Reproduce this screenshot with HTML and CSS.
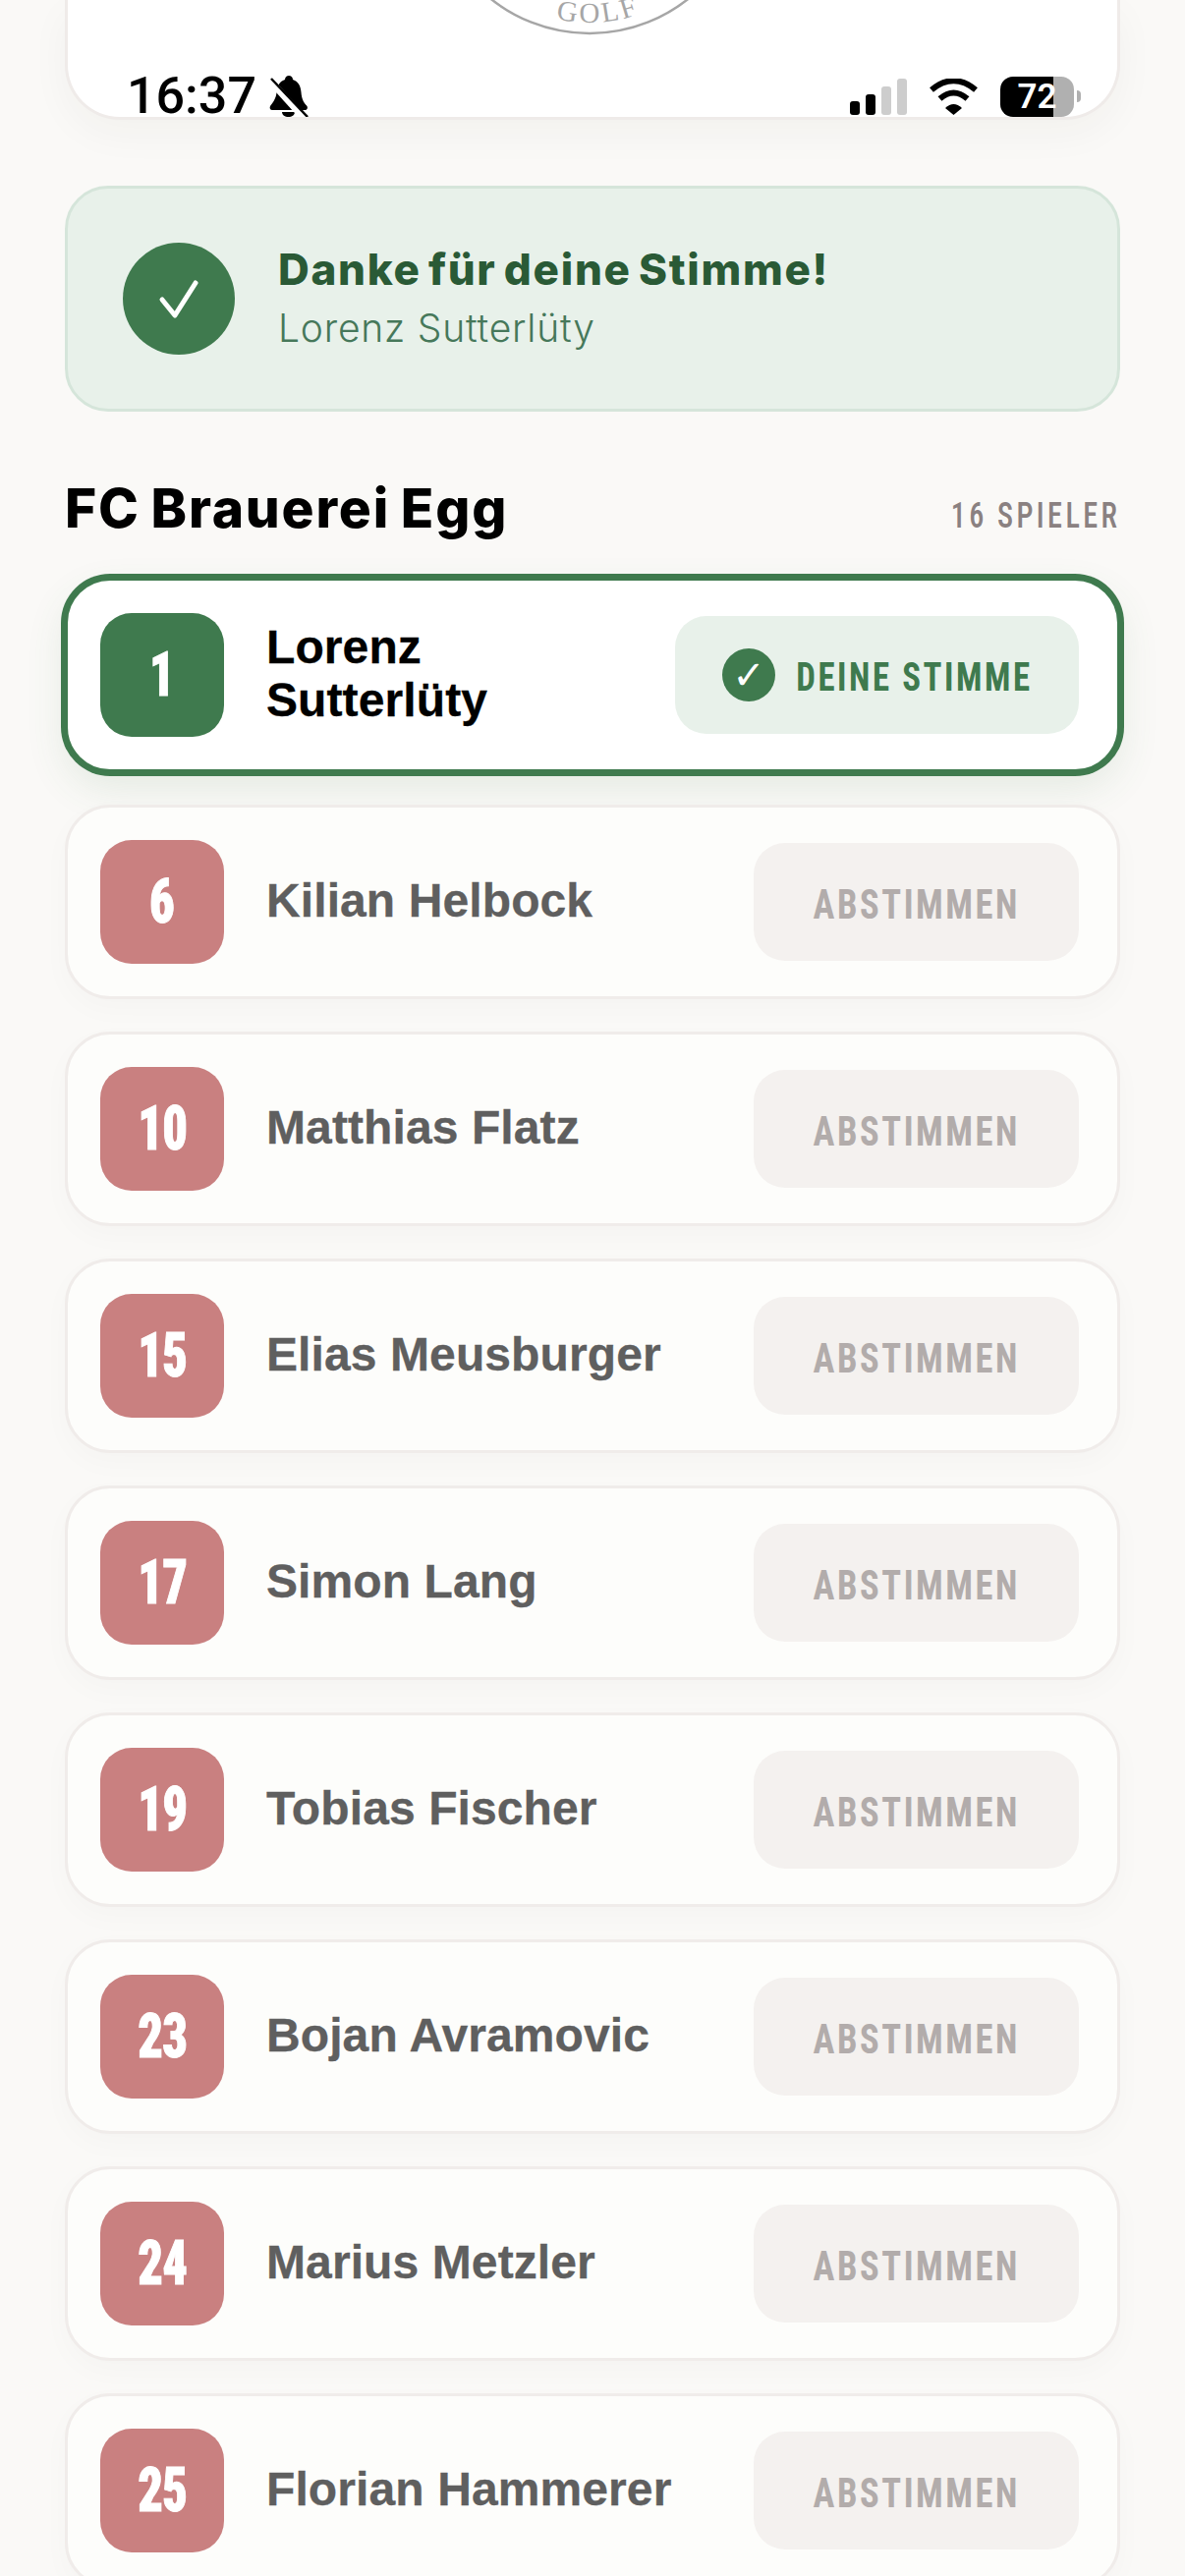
FILE: index.html
```html
<!DOCTYPE html>
<html lang="de">
<head>
    <meta charset="UTF-8">
    <meta name="viewport" content="width=device-width, initial-scale=1.0">
    <title>Abstimmung</title>
    <link rel="stylesheet" href="styles.css">
</head>
<body>
    <!-- Header card, scrolled almost out of view -->
    <div class="top-card">
        <svg class="logo" viewBox="0 0 360 40" width="360" height="40">
            <defs>
                <path id="golf-arc" d="M27 -127 A148 148 0 0 0 327 -127"/>
            </defs>
            <circle cx="177" cy="-127" r="161" fill="none" stroke="#a6a6a6" stroke-width="2.5"/>
            <text class="logo-text"><textPath href="#golf-arc" startOffset="52%" text-anchor="middle">GOLF</textPath></text>
        </svg>
        <div class="status-bar">
            <div class="status-left">
                <span class="time">16:37</span>
                <svg class="bell" viewBox="0 0 40 42" width="40" height="42">
                    <path d="M20 0c2 0 4 1.500 4 4 6 2 8 7 8.500 13 .5 6 2 10 6 14 1 2 0 4-2 4H3c-2 0-3-2-2-4 3-4 6-8 6.500-14C8 11 10 6 16 4c0-2.500 2-4 4-4z" fill="#000"/>
                    <path d="M13 37h13c0 3-3 5-6.500 5S13 40 13 37z" fill="#000"/>
                    <path d="M-1 3L37 45" stroke="#fff" stroke-width="7"/>
                    <path d="M2 3L39 42" stroke="#000" stroke-width="2.500"/>
                </svg>
            </div>
            <div class="status-right">
                <div class="signal">
                    <span class="bar bar-1"></span>
                    <span class="bar bar-2"></span>
                    <span class="bar bar-3"></span>
                    <span class="bar bar-4"></span>
                </div>
                <svg class="wifi" viewBox="0 0 51 37" width="51" height="37">
                    <path d="M3 11.500Q25.500 -7 48 11.500" fill="none" stroke="#000" stroke-width="6"/>
                    <path d="M11.500 20.500Q25.500 8.500 39.500 20.500" fill="none" stroke="#000" stroke-width="6"/>
                    <path d="M17 30Q25.500 22 34 30L25.500 37z" fill="#000"/>
                </svg>
                <div class="battery">
                    <div class="battery-body">72</div>
                    <div class="battery-nub"></div>
                </div>
            </div>
        </div>
    </div>

    <!-- Thank you banner -->
    <div class="banner">
        <div class="banner-icon">
            <svg viewBox="0 0 114 114" width="114" height="114">
                <path d="M40 58L53 74L74 41" fill="none" stroke="#fff" stroke-width="5" stroke-linecap="round" stroke-linejoin="round"/>
            </svg>
        </div>
        <div class="banner-text">
            <div class="banner-title">Danke für deine Stimme!</div>
            <div class="banner-name">Lorenz Sutterlüty</div>
        </div>
    </div>

    <div class="team-header">
        <h2>FC Brauerei Egg</h2>
        <span class="team-count">16 SPIELER</span>
    </div>

    <!-- Players -->
    <div class="players">
        <div class="player selected">
            <div class="number"><span class="digits">1</span></div>
            <div class="name">Lorenz Sutterlüty</div>
            <div class="vote mine"><span class="vote-check">✓</span><span class="vote-label">DEINE STIMME</span></div>
        </div>
        <div class="player">
            <div class="number"><span class="digits">6</span></div>
            <div class="name">Kilian Helbock</div>
            <div class="vote"><span class="vote-label">ABSTIMMEN</span></div>
        </div>
        <div class="player">
            <div class="number"><span class="digits">10</span></div>
            <div class="name">Matthias Flatz</div>
            <div class="vote"><span class="vote-label">ABSTIMMEN</span></div>
        </div>
        <div class="player">
            <div class="number"><span class="digits">15</span></div>
            <div class="name">Elias Meusburger</div>
            <div class="vote"><span class="vote-label">ABSTIMMEN</span></div>
        </div>
        <div class="player">
            <div class="number"><span class="digits">17</span></div>
            <div class="name">Simon Lang</div>
            <div class="vote"><span class="vote-label">ABSTIMMEN</span></div>
        </div>
        <div class="player">
            <div class="number"><span class="digits">19</span></div>
            <div class="name">Tobias Fischer</div>
            <div class="vote"><span class="vote-label">ABSTIMMEN</span></div>
        </div>
        <div class="player">
            <div class="number"><span class="digits">23</span></div>
            <div class="name">Bojan Avramovic</div>
            <div class="vote"><span class="vote-label">ABSTIMMEN</span></div>
        </div>
        <div class="player">
            <div class="number"><span class="digits">24</span></div>
            <div class="name">Marius Metzler</div>
            <div class="vote"><span class="vote-label">ABSTIMMEN</span></div>
        </div>
        <div class="player">
            <div class="number"><span class="digits">25</span></div>
            <div class="name">Florian Hammerer</div>
            <div class="vote"><span class="vote-label">ABSTIMMEN</span></div>
        </div>
    </div>
</body>
</html>
```

FILE: styles.css
```css
html, body {
    height: 100%;
    overflow: hidden;
}
body {
    font-family: 'Liberation Sans', Arial, sans-serif;
    background-color: #faf9f7;
    margin: 0;
    padding: 0 66px;
    box-sizing: border-box;
}
.top-card {
    height: 122px;
    box-sizing: border-box;
    background: white;
    border: 3px solid #efebe9;
    border-top: none;
    border-radius: 0 0 56px 56px;
    box-shadow: 0 14px 40px rgba(60, 40, 30, 0.04);
    display: flex;
    flex-direction: column;
    align-items: center;
}
.logo {
    display: block;
    flex-shrink: 0;
}
.logo-text {
    font-family: 'Liberation Serif', serif;
    font-size: 29px;
    letter-spacing: 3px;
    fill: #a6a6a6;
}
.status-bar {
    align-self: stretch;
    margin-top: 37px;
    height: 42px;
    padding: 0 37px 0 60px;
    display: flex;
    justify-content: space-between;
    flex-shrink: 0;
}
.status-left {
    display: flex;
    align-items: center;
    gap: 13px;
}
.time {
    font-family: Roboto, sans-serif;
    font-size: 52px;
    font-weight: 500;
    line-height: 42px;
    color: #000;
}
.status-right {
    display: flex;
    align-items: center;
}
.signal {
    display: flex;
    align-items: flex-end;
    gap: 6px;
    height: 37px;
    margin-right: 22px;
}
.bar {
    width: 10px;
    border-radius: 3px;
    background: #000;
}
.bar-1 { height: 14px; }
.bar-2 { height: 21px; }
.bar-3 { height: 29px; background: #cdcdcd; }
.bar-4 { height: 37px; background: #cdcdcd; }
.wifi {
    margin-right: 22px;
}
.battery {
    display: flex;
    align-items: center;
    gap: 3px;
}
.battery-body {
    width: 75px;
    height: 41px;
    border-radius: 13px;
    background: linear-gradient(90deg, #000 72%, #b0b0b0 72%);
    color: white;
    font-family: Roboto, sans-serif;
    font-size: 35px;
    font-weight: 600;
    line-height: 41px;
    text-align: center;
}
.battery-nub {
    width: 4px;
    height: 12px;
    border-radius: 0 6px 6px 0;
    background: #b0b0b0;
}
.banner {
    margin-top: 67px;
    height: 230px;
    box-sizing: border-box;
    padding-left: 56px;
    background: #e8f1ea;
    border: 3px solid #d5e5da;
    border-radius: 44px;
    display: flex;
    align-items: center;
    gap: 44px;
}
.banner-icon {
    width: 114px;
    height: 114px;
    border-radius: 50%;
    background: #3f7a4e;
}
.banner-icon svg {
    display: block;
}
.banner-title {
    font-family: Inter, sans-serif;
    font-size: 44px;
    font-weight: 800;
    letter-spacing: 1.700px;
    word-spacing: -4px;
    line-height: 50px;
    color: #2a5a36;
}
.banner-name {
    margin-top: 10px;
    font-family: Inter, sans-serif;
    font-size: 39px;
    font-weight: 300;
    letter-spacing: 0.800px;
    line-height: 50px;
    color: #46785a;
}
.team-header {
    height: 169px;
    box-sizing: border-box;
    padding-top: 63px;
    display: flex;
    justify-content: space-between;
    align-items: baseline;
}
.team-header h2 {
    margin: 0;
    font-family: Inter, sans-serif;
    font-size: 55px;
    font-weight: 800;
    letter-spacing: 1.800px;
    word-spacing: -3px;
    line-height: 70px;
    color: #000;
}
.team-count {
    font-family: Roboto, sans-serif;
    font-stretch: 75%;
    font-size: 36px;
    font-weight: 500;
    letter-spacing: 4px;
    color: #8a8181;
    transform: scaleX(0.84);
    transform-origin: right center;
}
.players {
    display: flex;
    flex-direction: column;
    gap: 33px;
}
.player {
    height: 198px;
    box-sizing: border-box;
    padding: 0 39px 0 33px;
    background: #fdfdfb;
    border: 3px solid #f0ecea;
    border-radius: 46px;
    box-shadow: 0 10px 30px rgba(60, 40, 30, 0.025);
    display: flex;
    align-items: center;
    flex-shrink: 0;
}
.player.selected {
    background: white;
    border-color: #3f7a4e;
    box-shadow: 0 0 0 4px #3f7a4e, 0 16px 40px rgba(63, 122, 78, 0.12);
}
.number {
    width: 126px;
    height: 126px;
    flex-shrink: 0;
    border-radius: 32px;
    background: #c98080;
    color: white;
    font-family: Roboto, sans-serif;
    font-stretch: 75%;
    font-size: 63px;
    font-weight: 900;
    line-height: 126px;
    text-align: center;
}
.digits {
    display: inline-block;
    letter-spacing: -1px;
    transform: scaleX(0.8);
    -webkit-text-stroke: 1px white;
}
.selected .number {
    background: #3f7a4e;
}
.name {
    flex: 1;
    margin-left: 43px;
    padding-bottom: 3px;
    font-size: 48px;
    font-weight: bold;
    letter-spacing: 0.100px;
    line-height: 54px;
    color: #5f5f5f;
    -webkit-text-stroke: 0.3px #5f5f5f;
}
.selected .name {
    padding-right: 30px;
    color: #000;
    -webkit-text-stroke: 0.3px #000;
}
.vote {
    width: 331px;
    height: 120px;
    box-sizing: border-box;
    padding-top: 3px;
    flex-shrink: 0;
    border-radius: 32px;
    background: #f4f1ef;
    color: #b2acab;
    font-family: Roboto, sans-serif;
    font-stretch: 75%;
    font-size: 43px;
    font-weight: 700;
    letter-spacing: 3px;
    display: flex;
    align-items: center;
    justify-content: center;
}
.vote-label {
    display: inline-block;
    transform: scaleX(0.85);
}
.vote.mine {
    width: 411px;
    padding-left: 48px;
    gap: 0;
    justify-content: flex-start;
    background: #e8f1ea;
    color: #3f7a4e;
    font-size: 41px;
}
.vote-check {
    width: 54px;
    height: 54px;
    flex-shrink: 0;
    margin-top: -3px;
    border-radius: 50%;
    background: #3f7a4e;
    color: white;
    font-family: 'DejaVu Sans', sans-serif;
    font-stretch: normal;
    font-size: 40px;
    letter-spacing: 0;
    line-height: 54px;
    text-align: center;
}
```
